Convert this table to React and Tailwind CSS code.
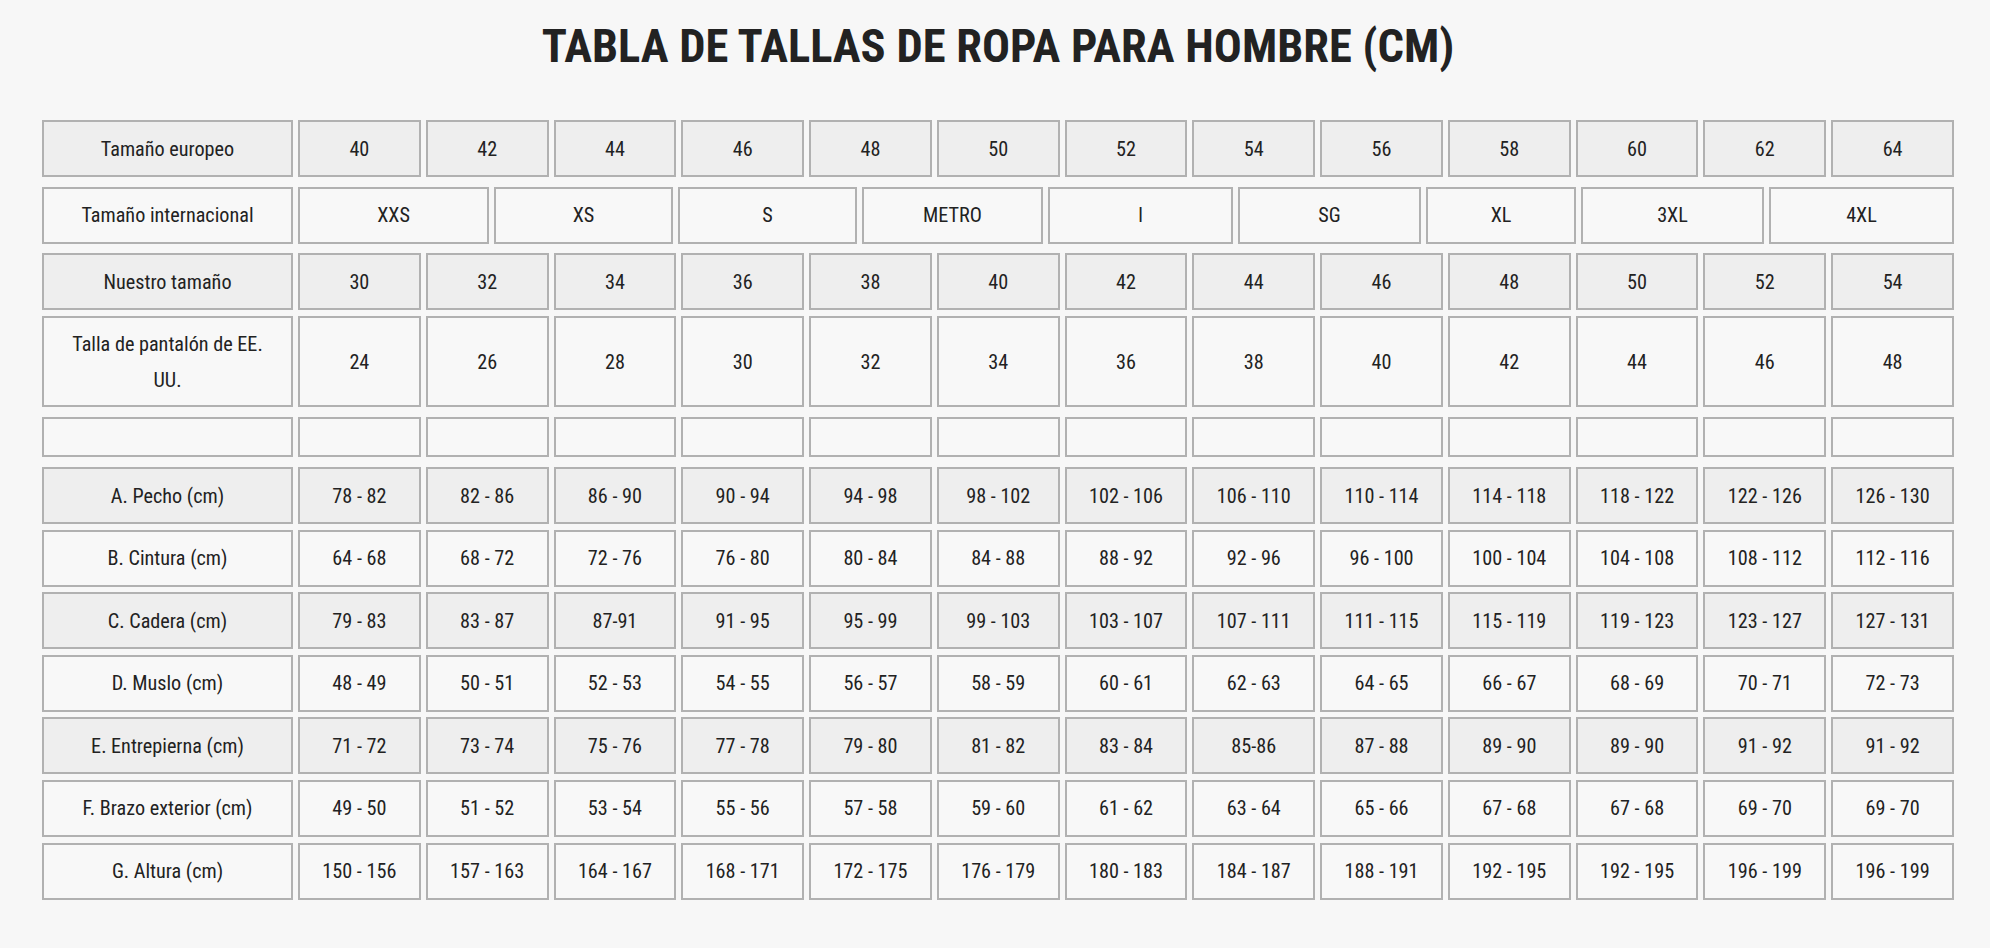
import React from "react";

const eu = ["40","42","44","46","48","50","52","54","56","58","60","62","64"];
const ours = ["30","32","34","36","38","40","42","44","46","48","50","52","54"];
const us = ["24","26","28","30","32","34","36","38","40","42","44","46","48"];
const intl = ["XXS","XS","S","METRO","l","SG","XL","3XL","4XL"];

const measures = [
  { label: "A. Pecho (cm)", gray: true, v: ["78 - 82","82 - 86","86 - 90","90 - 94","94 - 98","98 - 102","102 - 106","106 - 110","110 - 114","114 - 118","118 - 122","122 - 126","126 - 130"] },
  { label: "B. Cintura (cm)", gray: false, v: ["64 - 68","68 - 72","72 - 76","76 - 80","80 - 84","84 - 88","88 - 92","92 - 96","96 - 100","100 - 104","104 - 108","108 - 112","112 - 116"] },
  { label: "C. Cadera (cm)", gray: true, v: ["79 - 83","83 - 87","87-91","91 - 95","95 - 99","99 - 103","103 - 107","107 - 111","111 - 115","115 - 119","119 - 123","123 - 127","127 - 131"] },
  { label: "D. Muslo (cm)", gray: false, v: ["48 - 49","50 - 51","52 - 53","54 - 55","56 - 57","58 - 59","60 - 61","62 - 63","64 - 65","66 - 67","68 - 69","70 - 71","72 - 73"] },
  { label: "E. Entrepierna (cm)", gray: true, v: ["71 - 72","73 - 74","75 - 76","77 - 78","79 - 80","81 - 82","83 - 84","85-86","87 - 88","89 - 90","89 - 90","91 - 92","91 - 92"] },
  { label: "F. Brazo exterior (cm)", gray: false, v: ["49 - 50","51 - 52","53 - 54","55 - 56","57 - 58","59 - 60","61 - 62","63 - 64","65 - 66","67 - 68","67 - 68","69 - 70","69 - 70"] },
  { label: "G. Altura (cm)", gray: false, v: ["150 - 156","157 - 163","164 - 167","168 - 171","172 - 175","176 - 179","180 - 183","184 - 187","188 - 191","192 - 195","192 - 195","196 - 199","196 - 199"] },
];

function Cell({ children, gray }) {
  return (
    <div
      className={
        "flex items-center justify-center text-center border-2 border-[#b1b1b1] leading-[36px] px-2 " +
        (gray ? "bg-[#eeeeee]" : "bg-[#f8f8f8]")
      }
    >
      {children}
    </div>
  );
}

function Row({ label, values, gray, h = "h-[57px]" }) {
  return (
    <div className={"grid grid-cols-[251px_repeat(13,minmax(0,1fr))] gap-[5px] " + h}>
      <Cell gray={gray}>{label}</Cell>
      {values.map((v, i) => (
        <Cell key={i} gray={gray}>{v}</Cell>
      ))}
    </div>
  );
}

export default function App() {
  return (
    <div className="min-h-[948px] w-full bg-[#f7f7f7] text-[#222222] font-['Roboto_Condensed','Roboto',sans-serif] font-stretch-[87.5%]">
      <div className="ml-[42px] w-[1912px] pt-[23px]">
        <h1 className="text-center text-[46.5px] leading-[46px] font-bold text-[#222222]">
          TABLA DE TALLAS DE ROPA PARA HOMBRE (CM)
        </h1>
        <div className="mt-[51px] flex flex-col text-[20.2px]">
          <Row label="Tamaño europeo" values={eu} gray />
          <div className="mt-[9.5px] grid grid-cols-[251px_191px_179px_179px_181px_185px_183px_150px_183px_minmax(0,1fr)] gap-[5px] h-[57px]">
            <Cell>Tamaño internacional</Cell>
            {intl.map((v, i) => (
              <Cell key={i}>{v}</Cell>
            ))}
          </div>
          <div className="mt-[9.5px]">
            <Row label="Nuestro tamaño" values={ours} gray />
          </div>
          <div className="mt-[6px]">
            <Row label={<span className="block px-3">Talla de pantalón de EE. UU.</span>} values={us} h="h-[91px]" />
          </div>
          <div className="mt-[10px]">
            <Row label="" values={Array(13).fill("")} h="h-[40px]" />
          </div>
          <div className="mt-[10px] flex flex-col gap-[5.6px]">
            {measures.map((m, i) => (
              <Row key={i} label={m.label} values={m.v} gray={m.gray} />
            ))}
          </div>
        </div>
      </div>
    </div>
  );
}
